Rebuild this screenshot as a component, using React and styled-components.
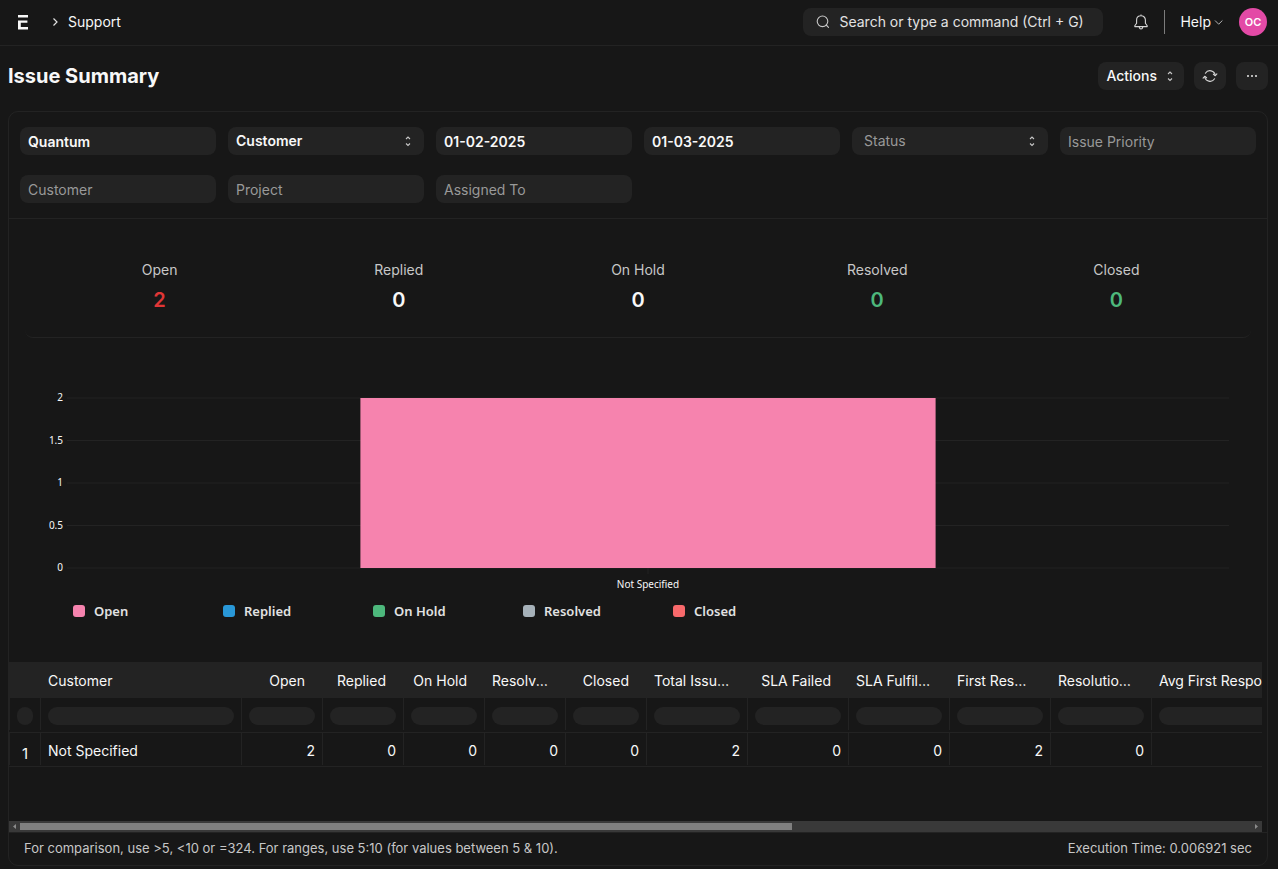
import React from 'react';
import styled, { createGlobalStyle } from 'styled-components';

const GlobalStyle = createGlobalStyle`
  * {
    box-sizing: border-box;
  }

  body {
    margin: 0;
    background: #171717;
    color: #f8f8f8;
    font-family: Inter, "Liberation Sans", sans-serif;
    font-size: 14px;
    line-height: 20px;
  }

  button, input, select {
    font: inherit;
    color: inherit;
    border: none;
    outline: none;
  }
`

const Navbar = styled.header`
  display: flex;
  align-items: center;
  justify-content: space-between;
  height: 46px;
  padding: 0 11px 1px 16px;
  border-bottom: 1px solid #232323;
`

const NavGroup = styled.div`
  display: flex;
  align-items: center;
`

const Logo = styled.a`
  display: flex;
  margin-right: 20px;
`

const Crumb = styled.a`
  display: flex;
  align-items: center;
  gap: 8px;
  color: #f8f8f8;
  text-decoration: none;
`

const SearchBox = styled.label`
  display: flex;
  align-items: center;
  gap: 8px;
  width: 300px;
  height: 28px;
  padding: 0 12px;
  border-radius: 8px;
  background: #232323;
`

const SearchInput = styled.input`
  flex: 1;
  min-width: 0;
  padding: 0;
  background: transparent;

  &::placeholder {
    color: #e2e2e2;
    opacity: 1;
  }
`

const BellButton = styled.button`
  display: flex;
  margin-left: 30px;
  padding: 0;
  background: transparent;
  cursor: pointer;
`

const Divider = styled.span`
  width: 1px;
  height: 24px;
  margin: 0 15px;
  background: #7c7c7c;
`

const HelpButton = styled.button`
  display: flex;
  align-items: center;
  gap: 2px;
  margin-right: 16px;
  padding: 0;
  background: transparent;
  cursor: pointer;
`

const Avatar = styled.button`
  width: 28px;
  height: 28px;
  padding: 0;
  border-radius: 50%;
  background: #e34aa6;
  color: #fff;
  font-size: 11px;
  font-weight: 600;
`

const PageHead = styled.div`
  display: flex;
  align-items: center;
  justify-content: space-between;
  padding: 16px 10px 21px 8px;
`

const Title = styled.h1`
  margin: 0;
  font-size: 20px;
  line-height: 28px;
  font-weight: 700;
`

const Actions = styled.div`
  display: flex;
  gap: 10px;
`

const Button = styled.button`
  display: flex;
  align-items: center;
  justify-content: center;
  gap: 7px;
  height: 28px;
  padding: 0 8px;
  border-radius: 8px;
  background: #232323;
  font-weight: 500;
  cursor: pointer;
`

const Card = styled.main`
  margin: 0 10px 3px 8px;
  border: 1px solid #232323;
  border-radius: 10px;
`

const Filters = styled.form`
  display: grid;
  grid-template-columns: repeat(6, 1fr);
  gap: 20px 12px;
  padding: 15px 11px;
  border-bottom: 1px solid #232323;
`

const FilterInput = styled.input`
  width: 100%;
  height: 28px;
  padding: 0 8px;
  border-radius: 8px;
  background: #232323;
  font-weight: 600;

  &::placeholder {
    color: #999;
    font-weight: 400;
    opacity: 1;
  }
`

const SelectWrap = styled.div`
  display: grid;
  align-items: center;

  > * {
    grid-area: 1 / 1;
  }

  > svg {
    justify-self: end;
    margin-right: 10px;
    pointer-events: none;
  }
`

const FilterSelect = styled.select`
  appearance: none;
  width: 100%;
  height: 28px;
  padding: 0 ${p => p.$empty ? '12px' : '8px'};
  border-radius: 8px;
  background: #232323;
  color: ${p => p.$empty ? '#999' : '#f8f8f8'};
  font-weight: ${p => p.$empty ? 400 : 600};
`

const Summary = styled.section`
  display: flex;
  margin: 0 16px;
  padding: 41px 15px 25px;
  border-bottom: 1px solid #232323;
  border-radius: 8px;
`

const Stat = styled.div`
  flex: 1;
  text-align: center;
`

const StatLabel = styled.div`
  margin-bottom: 8px;
  color: #c7c7c7;
`

const StatValue = styled.div`
  font-size: 20px;
  line-height: 24px;
  font-weight: 600;
  color: ${p => p.$color};
`

const ChartArea = styled.section`
  padding: 40px 38px 41px 58px;
  font-family: "Noto Sans", "Open Sans", sans-serif;
`

const Plot = styled.svg`
  display: block;
  width: 100%;
  height: 223px;
  overflow: visible;

  text {
    fill: #f8f8f8;
    font-size: 10px;
  }

  line {
    stroke: #232323;
  }
`

const Legend = styled.ul`
  display: flex;
  margin: 0;
  padding: 0 0 0 6px;
  list-style: none;
`

const LegendItem = styled.li`
  display: flex;
  align-items: center;
  gap: 9px;
  width: 150px;
  color: #e2e2e2;
  font-size: 13px;
  font-weight: 600;
`

const Swatch = styled.span`
  width: 12px;
  height: 12px;
  border-radius: 3px;
  background: ${p => p.$color};
`

const TableScroll = styled.div`
  min-height: 159px;
  margin-right: 5px;
  overflow: hidden;
`

const Table = styled.table`
  table-layout: fixed;
  width: 1344px;
  border-spacing: 0;
`

const Th = styled.th`
  height: 36px;
  padding: 2px 18px 0 7px;
  overflow: hidden;
  background: #232323;
  font-weight: 400;
  text-align: ${p => p.$align || 'right'};
  text-overflow: ellipsis;
  white-space: nowrap;
`

const Td = styled.td`
  padding: 0 0 ${p => p.$filter ? '2px' : '1px'};
  border-bottom: 1px solid #232323;
`

const Cell = styled.div`
  display: flex;
  align-items: center;
  justify-content: ${p => p.$align || 'flex-end'};
  height: 32px;
  padding: ${p => p.$filter ? '4px 7px 0' : '3px 7px 0'};
  border-right: 1px solid #232323;

  td:first-child > & {
    border-left: 1px solid #232323;
    font-size: 15px;
    ${p => !p.$filter && 'padding-top: 9px;'}
  }
`

const ColumnFilter = styled.input`
  width: 100%;
  height: 18px;
  padding: 0 8px;
  border-radius: 9px;
  background: #232323;
`

const Scrollbar = styled.div`
  display: flex;
  align-items: center;
  gap: 2px;
  height: 11px;
  margin-right: 5px;
  padding: 0 3px;
  background: #393939;
`

const ScrollTrack = styled.div`
  flex: 1;
  margin-left: 1px;
`

const ScrollThumb = styled.div`
  width: 62.7%;
  height: 7px;
  background: #7f7f7f;
`

const Footer = styled.footer`
  display: flex;
  justify-content: space-between;
  padding: 5px 15px 7px;
  border-top: 1px solid #232323;
  color: #c7c7c7;
  font-size: 13px;
`

const SortIcon = () => (
  <svg width="12" height="12" viewBox="0 0 12 12" fill="none" stroke="#c7c7c7" strokeWidth="1.1" aria-hidden="true">
    <path d="M4 4L6 2L8 4M4 8.5L6 10.5L8 8.5" />
  </svg>
)

const LogoIcon = () => (
  <svg width="14" height="16" viewBox="0 0 14 16" fill="#f8f8f8" aria-hidden="true">
    <path d="M2 1H12V3.4H2zM2 6.4H11.4V8.8H4.8V13.1H12V15.5H2z" />
  </svg>
)

const SearchIcon = () => (
  <svg width="16" height="16" viewBox="0 0 16 16" fill="none" stroke="#c7c7c7" strokeWidth="1.1" aria-hidden="true">
    <circle cx="7.5" cy="7.3" r="5.3" />
    <path d="M11.2 11L13.5 13.3" strokeLinecap="round" />
  </svg>
)

const BellIcon = () => (
  <svg width="16" height="16" viewBox="0 0 16 16" fill="none" stroke="#d4d4d4" strokeWidth="1.1" strokeLinejoin="round" aria-hidden="true">
    <path d="M8 0.6V1.8M8 1.8C5.4 1.8 3.6 3.6 3.6 6V9.2L1.8 11.8V12.6H14.2V11.8L12.4 9.2V6C12.4 3.6 10.6 1.8 8 1.8Z" />
    <path d="M6.2 12.8C6.4 14.2 7 15 8 15S9.6 14.2 9.8 12.8" />
  </svg>
)

const RefreshIcon = () => (
  <svg width="16" height="16" viewBox="0 0 16 16" fill="none" stroke="#d4d4d4" strokeWidth="1.1" strokeLinecap="round" strokeLinejoin="round" aria-hidden="true">
    <path d="M3.4 5.2A5.4 5.4 0 0 1 13.3 7.4M12.6 10.8A5.4 5.4 0 0 1 2.7 8.6" />
    <path d="M11.4 6.2L13.3 7.7L14.9 5.9M4.6 9.8L2.7 8.3L1.1 10.1" />
  </svg>
)

const DotsIcon = () => (
  <svg width="16" height="16" viewBox="0 0 16 16" fill="#d4d4d4" aria-hidden="true">
    <rect x="3" y="7" width="2" height="2" rx="0.8" />
    <rect x="7" y="7" width="2" height="2" rx="0.8" />
    <rect x="11" y="7" width="2" height="2" rx="0.8" />
  </svg>
)

const filters = [
  { label: 'Company', value: 'Quantum' },
  { label: 'Based On', value: 'Customer', select: true },
  { label: 'From Date', value: '01-02-2025' },
  { label: 'To Date', value: '01-03-2025' },
  { label: 'Status', select: true },
  { label: 'Issue Priority' },
  { label: 'Customer' },
  { label: 'Project' },
  { label: 'Assigned To' },
]

const stats = [
  { label: 'Open', value: 2, color: '#e03636' },
  { label: 'Replied', value: 0, color: '#f8f8f8' },
  { label: 'On Hold', value: 0, color: '#f8f8f8' },
  { label: 'Resolved', value: 0, color: '#4db87c' },
  { label: 'Closed', value: 0, color: '#4db87c' },
]

const legend = [
  { label: 'Open', color: '#f683ae' },
  { label: 'Replied', color: '#2998d8' },
  { label: 'On Hold', color: '#4db87c' },
  { label: 'Resolved', color: '#a6b1b9' },
  { label: 'Closed', color: '#f8696b' },
]

const columns = [
  { label: 'Customer', width: 201, value: 'Not Specified', align: 'left' },
  { label: 'Open', width: 81, value: 2 },
  { label: 'Replied', width: 81, value: 0 },
  { label: 'On Hold', width: 81, value: 0 },
  { label: 'Resolved', width: 81, value: 0 },
  { label: 'Closed', width: 81, value: 0 },
  { label: 'Total Issues', width: 101, value: 2 },
  { label: 'SLA Failed', width: 101, value: 0 },
  { label: 'SLA Fulfilled', width: 101, value: 0 },
  { label: 'First Response', width: 101, value: 2 },
  { label: 'Resolution Time', width: 101, value: 0 },
  { label: 'Avg First Response', width: 201, value: '', align: 'left' },
]

const ticks = [2, 1.5, 1, 0.5, 0]

const Filter = ({ label, value, select }) => {
  if (!select) {
    return <FilterInput aria-label={label} placeholder={label} defaultValue={value} />
  }

  return (
    <SelectWrap>
      <FilterSelect aria-label={label} $empty={!value}>
        <option>{value || label}</option>
      </FilterSelect>
      <SortIcon />
    </SelectWrap>
  )
}

const Chart = () => (
  <ChartArea>
    <Plot role="img" aria-label="Issues by status">
      {ticks.map(tick => {
        const y = 190 - tick * 85

        return (
          <g key={tick}>
            <line x1="0" x2="100%" y1={y} y2={y} />
            <text x="-4" y={y + 3} textAnchor="end">{tick}</text>
          </g>
        )
      })}
      <line x1="50%" x2="50%" y1="190" y2="196" />
      <rect x="25.25%" y="20" width="49.5%" height="170" fill="#f683ae" />
      <text x="50%" y="210" textAnchor="middle">Not Specified</text>
    </Plot>
    <Legend>
      {legend.map(({ label, color }) => (
        <LegendItem key={label}>
          <Swatch $color={color} />
          {label}
        </LegendItem>
      ))}
    </Legend>
  </ChartArea>
)

const IssueTable = () => (
  <TableScroll>
    <Table>
      <colgroup>
        <col width="32" />
        {columns.map(col => <col key={col.label} width={col.width} />)}
      </colgroup>
      <thead>
        <tr>
          <Th aria-label="Row" />
          {columns.map(col => <Th key={col.label} $align={col.align}>{col.label}</Th>)}
        </tr>
      </thead>
      <tbody>
        <tr>
          <Td $filter><Cell $filter><ColumnFilter aria-label="Filter rows" /></Cell></Td>
          {columns.map(col => (
            <Td key={col.label} $filter>
              <Cell $filter><ColumnFilter aria-label={`Filter ${col.label}`} /></Cell>
            </Td>
          ))}
        </tr>
        <tr>
          <Td><Cell $align="center">1</Cell></Td>
          {columns.map(col => (
            <Td key={col.label}>
              <Cell $align={col.align}>{col.value}</Cell>
            </Td>
          ))}
        </tr>
      </tbody>
    </Table>
  </TableScroll>
)

const App = () => (
  <>
    <GlobalStyle />
    <Navbar>
      <NavGroup>
        <Logo href="#" aria-label="Home"><LogoIcon /></Logo>
        <Crumb href="#">
          <svg width="10" height="10" viewBox="0 0 10 10" fill="none" stroke="#e2e2e2" strokeWidth="1.2" aria-hidden="true">
            <path d="M3.5 1.5L7 5L3.5 8.5" />
          </svg>
          Support
        </Crumb>
      </NavGroup>
      <NavGroup>
        <SearchBox>
          <SearchIcon />
          <SearchInput aria-label="Search" placeholder="Search or type a command (Ctrl + G)" />
        </SearchBox>
        <BellButton aria-label="Notifications"><BellIcon /></BellButton>
        <Divider />
        <HelpButton>
          Help
          <svg width="10" height="10" viewBox="0 0 10 10" fill="none" stroke="#b3b3b3" aria-hidden="true">
            <path d="M2 3.5L5.7 7.2L9.4 3.5" />
          </svg>
        </HelpButton>
        <Avatar>OC</Avatar>
      </NavGroup>
    </Navbar>
    <PageHead>
      <Title>Issue Summary</Title>
      <Actions>
        <Button>Actions <SortIcon /></Button>
        <Button aria-label="Refresh"><RefreshIcon /></Button>
        <Button aria-label="Menu"><DotsIcon /></Button>
      </Actions>
    </PageHead>
    <Card>
      <Filters>
        {filters.map(filter => <Filter key={filter.label} {...filter} />)}
      </Filters>
      <Summary>
        {stats.map(({ label, value, color }) => (
          <Stat key={label}>
            <StatLabel>{label}</StatLabel>
            <StatValue $color={color}>{value}</StatValue>
          </Stat>
        ))}
      </Summary>
      <Chart />
      <IssueTable />
      <Scrollbar aria-hidden="true">
        <svg width="5" height="7" viewBox="0 0 5 7" fill="#8c8c8c"><path d="M4 1V6L1 3.5z" /></svg>
        <ScrollTrack><ScrollThumb /></ScrollTrack>
        <svg width="5" height="7" viewBox="0 0 5 7" fill="#8c8c8c"><path d="M1 1V6L4 3.5z" /></svg>
      </Scrollbar>
      <Footer>
        <span>For comparison, use &gt;5, &lt;10 or =324. For ranges, use 5:10 (for values between 5 &amp; 10).</span>
        <span>Execution Time: 0.006921 sec</span>
      </Footer>
    </Card>
  </>
)

export default App
